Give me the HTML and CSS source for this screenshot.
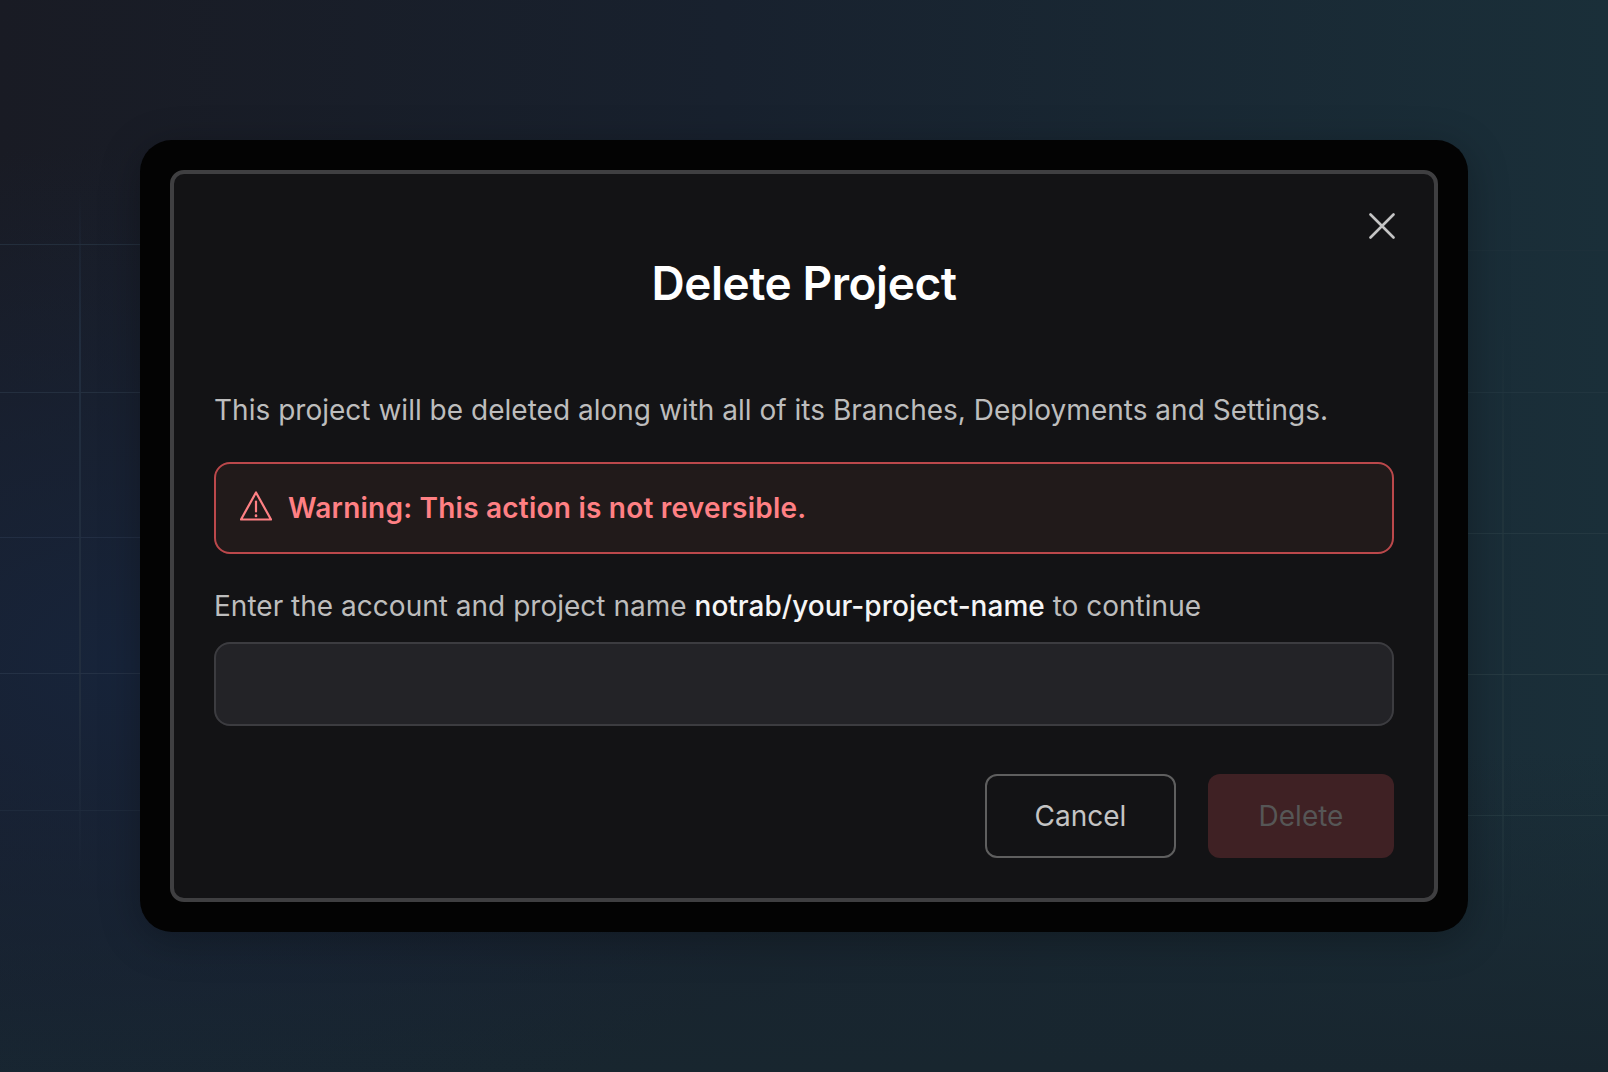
FILE: index.html
```html
<!DOCTYPE html>
<html lang="en">
<head>
<meta charset="utf-8">
<title>Delete Project</title>
<link rel="stylesheet" href="styles.css">
</head>
<body>
<div class="grid grid-left" aria-hidden="true"></div>
<div class="grid grid-right" aria-hidden="true"></div>
<main class="frame">
  <section class="modal">
    <button class="close" aria-label="Close">
      <svg viewBox="0 0 26 26" width="26" height="26" fill="none" stroke="#c4c4c4" stroke-width="2.6" stroke-linecap="round"><path d="M1.5 1.5l23 23M24.500 1.500l-23 23"/></svg>
    </button>
    <h1 class="title">Delete Project</h1>
    <p class="desc">This project will be deleted along with all of its Branches, Deployments and Settings.</p>
    <div class="alert">
      <svg class="alert-icon" viewBox="0 0 32 30" width="32" height="30" fill="none" stroke="#ff8084" stroke-width="2.2" stroke-linecap="round" stroke-linejoin="round"><path d="M16 1.500L1 28.500h30z"/><path d="M16 10.500v10"/><path d="M16 24.500v.5" stroke-width="2.600"/></svg>
      <span>Warning: This action is not reversible.</span>
    </div>
    <label class="label" for="name">Enter the account and project name <strong>notrab/your-project-name</strong> to continue</label>
    <input class="input" id="name" type="text">
    <div class="actions">
      <button class="btn btn-cancel">Cancel</button>
      <button class="btn btn-delete" disabled>Delete</button>
    </div>
  </section>
</main>
</body>
</html>
```
FILE: styles.css
```css
* { box-sizing: border-box; }
html, body { height: 100%; }
body {
  margin: 0;
  height: 1072px;
  overflow: hidden;
  position: relative;
  display: flex;
  align-items: center;
  justify-content: center;
  font-family: Inter, "Liberation Sans", sans-serif;
  background:
    radial-gradient(ellipse 760px 520px at 8% 62%, #17243a 0%, rgba(23,36,58,0) 100%),
    linear-gradient(180deg, rgba(24,36,48,0) 70%, #18262f 100%),
    linear-gradient(90deg, #191b24 0%, #18212e 45%, #1a2f39 100%);
}
.grid { position: absolute; top: 0; bottom: 0; pointer-events: none; }
.grid-left {
  left: 0;
  width: 140px;
  background-repeat: no-repeat;
  background-image:
    linear-gradient(#232e3c, #232e3c),
    linear-gradient(#242f3f, #242f3f),
    linear-gradient(#222e43, #222e43),
    linear-gradient(#243145, #243145),
    linear-gradient(#1e2a3c, #1e2a3c),
    linear-gradient(180deg, rgba(33,45,62,0) 18%, #212d3e 32%, #212d3e 65%, rgba(33,45,62,0) 82%);
  background-size: 100% 1px, 100% 1px, 100% 1px, 100% 1px, 100% 1px, 2px 100%;
  background-position: 0 244px, 0 392px, 0 537px, 0 673px, 0 810px, 79px 0;
}
.grid-right {
  right: 0;
  width: 140px;
  background-repeat: no-repeat;
  background-image:
    linear-gradient(#1d303a, #1d303a),
    linear-gradient(#21353f, #21353f),
    linear-gradient(#243841, #243841),
    linear-gradient(#263a42, #263a42),
    linear-gradient(#243840, #243840),
    linear-gradient(180deg, rgba(33,52,60,0) 30%, #21343c 45%, #21343c 75%, rgba(33,52,60,0) 88%);
  background-size: 100% 1px, 100% 1px, 100% 1px, 100% 1px, 100% 1px, 2px 100%;
  background-position: 0 250px, 0 392px, 0 533px, 0 674px, 0 815px, 34px 0;
}
.frame {
  position: relative;
  width: 1328px;
  height: 792px;
  padding: 30px;
  background: #030303;
  border-radius: 32px;
  box-shadow: 0 8px 40px rgba(0, 0, 0, .28);
}
.modal {
  position: relative;
  height: 100%;
  padding: 77px 40px 40px;
  background: #131315;
  border: 4px solid #3f3f41;
  border-radius: 14px;
  color: #bdbdbd;
  font-size: 28px;
  line-height: 40px;
  letter-spacing: .015px;
}
.close {
  position: absolute;
  top: 39px;
  right: 39px;
  width: 26px;
  height: 26px;
  padding: 0;
  background: none;
  border: 0;
  display: flex;
}
.title {
  margin: 0;
  font-size: 46px;
  line-height: 64px;
  font-weight: 560;
  letter-spacing: -.45px;
  text-align: center;
  color: #fff;
}
.desc { margin: 75px 0 0; }
.alert {
  display: flex;
  align-items: center;
  gap: 16px;
  height: 92px;
  margin-top: 32px;
  padding: 0 24px;
  background: #211a1a;
  border: 2px solid #bb484b;
  border-radius: 16px;
  color: #ff8084;
  font-weight: 600;
  letter-spacing: .22px;
}
.alert-icon { margin-top: -4px; }
.label { display: block; margin-top: 32px; }
.label strong { font-weight: 500; color: #f5f5f5; letter-spacing: .02px; }
.input {
  display: block;
  width: 100%;
  height: 84px;
  margin-top: 16px;
  background: #232327;
  border: 2px solid #3c3c40;
  border-radius: 16px;
}
.actions {
  display: flex;
  justify-content: flex-end;
  gap: 32px;
  margin-top: 48px;
}
.btn {
  height: 84px;
  border-radius: 12px;
  font: 400 28px/40px Inter, "Liberation Sans", sans-serif;
}
.btn-cancel {
  width: 191px;
  background: transparent;
  border: 2px solid #5f5f5f;
  color: #c4c4c4;
}
.btn-delete {
  width: 186px;
  background: #3f2124;
  border: 0;
  color: #565656;
}
```
